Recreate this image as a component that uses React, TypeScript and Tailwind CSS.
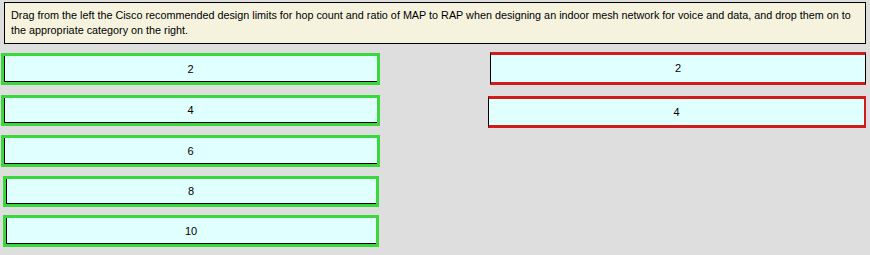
import React from "react";

const greenBox =
  "flex items-center justify-center border-[3px] border-[#3ad83a] bg-[#e0ffff] shadow-[inset_1px_-1px_0_#000]";

export default function App() {
  return (
    <div className="w-[870px] h-[255px] overflow-hidden bg-[#dedede] pt-[2px] font-['Liberation_Sans',Arial,sans-serif] text-[11px] text-black">
      <div className="mx-[4px] h-[42px] border border-black bg-[#f5f3de] pl-[6px] pr-[4px] pt-[5px] text-[10.8px] leading-[15px]">
        Drag from the left the Cisco recommended design limits for hop count and ratio of MAP to RAP when designing an indoor mesh network for voice and data, and drop them on to the appropriate category on the right.
      </div>
      <div className="mt-[8px] flex">
        <div className="ml-[1px] flex w-[379px] flex-col pt-[1px]">
          <div className={`${greenBox} h-[32px]`}>2</div>
          <div className={`${greenBox} mt-[10px] h-[31px]`}>4</div>
          <div className={`${greenBox} mt-[9px] h-[32px]`}>6</div>
          <div className={`${greenBox} mt-[9px] ml-[2px] w-[376px] h-[31px]`}>8</div>
          <div className={`${greenBox} mt-[8px] ml-[2px] w-[376px] h-[32px]`}>10</div>
        </div>
        <div className="ml-[108px] flex flex-col">
          <div className="ml-[2px] flex h-[33px] w-[376px] items-center justify-center border-y-[3px] border-y-[#d01c1c] border-x border-x-black bg-[#e0ffff]">
            2
          </div>
          <div className="mt-[11px] flex h-[32px] w-[378px] items-center justify-center border-y-[3px] border-y-[#d01c1c] border-l border-l-black border-r-2 border-r-[#d01c1c] bg-[#e0ffff]">
            4
          </div>
        </div>
      </div>
    </div>
  );
}
